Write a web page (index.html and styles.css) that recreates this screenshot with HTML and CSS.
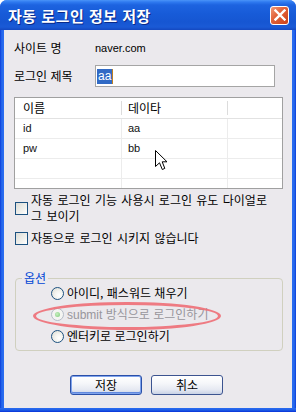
FILE: index.html
```html
<!DOCTYPE html>
<html lang="ko">
<head>
<meta charset="utf-8">
<link rel="stylesheet" href="styles.css">
</head>
<body>
<div class="win">
  <div class="titlebar">
    <span class="title-text">자동 로그인 정보 저장</span>
    <span class="close">
      <svg width="12" height="12" viewBox="0 0 12 12"><path d="M1.5 1.5 L10.5 10.5 M10.5 1.5 L1.5 10.5" stroke="#fff" stroke-width="2.4" stroke-linecap="square"/></svg>
    </span>
  </div>
  <div class="client">
    <div class="row r1"><span class="lbl">사이트 명</span><span class="val">naver.com</span></div>
    <div class="row r2"><span class="lbl">로그인 제목</span><div class="input"><span class="sel">aa</span><span class="caret"></span></div></div>
    <div class="list">
      <div class="lrow head"><div class="cell c1">이름</div><div class="cell c2">데이타</div><div class="cell c3"></div></div>
      <div class="lrow"><div class="cell c1 en">id</div><div class="cell c2 en">aa</div><div class="cell c3"></div></div>
      <div class="lrow"><div class="cell c1 en">pw</div><div class="cell c2 en">bb</div><div class="cell c3"></div></div>
      <div class="lrow"><div class="cell c1"></div><div class="cell c2"></div><div class="cell c3"></div></div>
      <div class="lrow last"><div class="cell c1"></div><div class="cell c2"></div><div class="cell c3"></div></div>
      <svg class="cursor" width="13" height="22" viewBox="0 0 13 22"><path d="M0.5 0.5 L0.5 16.5 L4.5 12.8 L7.3 19.5 L9.8 18.4 L7.2 11.8 L12 11.8 Z" fill="#fff" stroke="#000" stroke-width="1" stroke-linejoin="miter"/></svg>
    </div>
    <div class="chk chk1"><span class="box"></span><span class="ctext">자동 로그인 기능 사용시 로그인 유도 다이얼로<br>그 보이기</span></div>
    <div class="chk chk2"><span class="box"></span><span class="ctext">자동으로 로그인 시키지 않습니다</span></div>
    <fieldset class="group">
      <legend>옵션</legend>
      <div class="radios">
        <div class="radio"><span class="dot"></span><span class="rtext">아이디, 패스워드 채우기</span></div>
        <div class="radio disabled"><span class="dot on"></span><span class="rtext"><span class="en">submit</span> 방식으로 로그인하기</span></div>
        <div class="radio"><span class="dot"></span><span class="rtext">엔터키로 로그인하기</span></div>
      </div>
      <span class="mark"></span>
    </fieldset>
    <div class="buttons">
      <button class="btn default">저장</button>
      <button class="btn">취소</button>
    </div>
  </div>
</div>
</body>
</html>
```
FILE: styles.css
```css
html, body { margin: 0; padding: 0; }
body {
  width: 296px; height: 412px; overflow: hidden;
  font-family: "Noto Sans CJK KR", sans-serif;
  font-size: 12px; color: #000;
  background: #fff;
}
.win {
  width: 296px; height: 412px; box-sizing: border-box;
  background: linear-gradient(90deg, #0831d9 0, #1e5fe6 1px, #2a6cf0 3px, #2a6cf0 calc(100% - 3px), #1e5fe6 calc(100% - 1px), #0831d9 100%);
  border-radius: 7px 7px 0 0;
  display: flex; flex-direction: column;
  padding: 0 4px 4px 4px;
  position: relative;
}
.win::after {
  content: ""; position: absolute; left: 0; right: 0; bottom: 0; height: 4px;
  background: linear-gradient(#2a6cf0, #1e5fe6 2px, #0831d9);
}
.titlebar {
  height: 30px; margin: 0 -4px; padding: 0 7px 0 8px;
  display: flex; align-items: center; justify-content: space-between;
  border-radius: 7px 7px 0 0;
  background: linear-gradient(#4a94f8 0, #2f7af0 2px, #1d63e0 5px, #175bd8 14px, #1656d2 22px, #1a5ad6 27px, #1448c0 30px);
}
.title-text {
  color: #fff; font-weight: bold; font-size: 15px; line-height: 18px;
  letter-spacing: 0.5px; text-shadow: 1px 1px 0 #0a2a8a;
  margin-top: 1px;
}
.close {
  width: 19px; height: 19px; box-sizing: border-box;
  border: 1px solid #fff; border-radius: 3px;
  background: linear-gradient(135deg, #f19a78 0, #e2643c 40%, #cc4118 100%);
  display: flex; align-items: center; justify-content: center;
}
.client {
  flex: 1; background: #ebe9ed;
  padding: 10px 0 0 10px;
  display: flex; flex-direction: column;
  position: relative; z-index: 1;
}
.row { display: flex; align-items: center; }
.lbl { width: 81px; line-height: 16px; }
.val { font-family: "Liberation Sans", sans-serif; font-size: 11px; line-height: 16px; }
.r1 { height: 16px; }
.r2 { margin-top: 9px; }
.input {
  width: 180px; height: 22px; box-sizing: border-box;
  border: 1px solid #a5a5a5; background: #fff;
  display: flex; align-items: center; padding-left: 1px;
}
.sel {
  background: #316ac5; color: #fff;
  font-family: "Liberation Sans", sans-serif; font-size: 12px; line-height: 15px;
  padding: 0 1px;
}
.caret { width: 1px; height: 15px; background: #c08020; }
.list {
  margin-top: 10px; width: 269px; height: 92px; box-sizing: border-box;
  border: 1px solid #a0a0a0; background: #fff;
  position: relative; overflow: hidden;
}
.lrow { display: flex; height: 20px; border-bottom: 1px solid #ececec; box-sizing: border-box; }
.lrow.head { height: 21px; border-bottom: 1px solid #e2e2e2; }
.lrow.last { border-bottom: none; }
.cell { box-sizing: border-box; padding-left: 8px; line-height: 19px; border-right: 1px solid #ececec; }
.head .cell { line-height: 20px; font-size: 12px; border-right: none; position: relative; }
.head .c1::after, .head .c2::after {
  content: ""; position: absolute; right: 0; top: 3px; bottom: 3px; width: 1px; background: #dcdcdc;
}
.c1 { width: 107px; }
.c2 { width: 106px; padding-left: 6px; }
.c3 { flex: 1; border-right: none; }
.en { font-family: "Liberation Sans", sans-serif; font-size: 11px; color: #111; }
.cursor { position: absolute; left: 140px; top: 52px; }
.chk { display: flex; align-items: center; }
.chk1 { margin-top: 3px; }
.chk2 { margin-top: 6px; }
.box {
  flex: none; width: 13px; height: 13px; box-sizing: border-box;
  border: 1px solid #1c5180;
  background: linear-gradient(135deg, #dcdcd7 0, #f0f0ec 60%, #fff 100%);
  margin-left: 1px; margin-right: 3px;
}
.ctext { line-height: 16px; word-spacing: 1px; white-space: nowrap; }
.group {
  margin: 24px 0 0 1px; padding: 0 0 6px 0;
  width: 268px; box-sizing: border-box;
  border: 1px solid #d0d0bf; border-radius: 4px;
  position: relative;
}
.group legend {
  color: #0046d5; padding: 0 2px; margin-left: 6px; line-height: 16px; font-size: 12px;
}
.radios { display: flex; flex-direction: column; gap: 5.5px; padding-left: 35px; margin-top: -1px; }
.radio { display: flex; align-items: center; height: 16px; }
.dot {
  width: 13px; height: 13px; box-sizing: border-box; border-radius: 50%;
  border: 1px solid #1c5180;
  background: radial-gradient(circle at 65% 65%, #fff 0, #f4f4f0 40%, #d8d8d0 100%);
  margin-right: 3px; position: relative;
}
.disabled .dot { border-color: #b4bcc8; background: #f4f4f2; }
.dot.on::after {
  content: ""; position: absolute; left: 3px; top: 3px; width: 5px; height: 5px; border-radius: 50%;
  background: radial-gradient(circle at 40% 40%, #c8f0c0, #7cc87a);
}
.rtext { line-height: 16px; }
.disabled .rtext { color: #98969c; }
.disabled .en { color: #98969c; font-size: 12px; }
.mark {
  position: absolute; left: 17px; top: 16px; width: 188px; height: 28px; box-sizing: border-box;
  border: 3px solid rgba(238, 110, 118, 0.9); border-radius: 50%;
}
.buttons { display: flex; gap: 9px; margin-top: 24px; padding-left: 56px; }
.btn {
  width: 72px; height: 20px; box-sizing: border-box; padding: 0;
  font-family: "Noto Sans CJK KR", sans-serif; font-size: 12px; line-height: 16px; color: #000;
  border: 1px solid #3c5490; border-radius: 3px;
  background: linear-gradient(#ffffff 0, #f6f7fa 40%, #e6e9f2 75%, #c9d2e6 100%);
}
.btn.default {
  border-color: #2a4fa8;
  box-shadow: inset 0 0 0 1px #7fa3ec, inset 0 -1px 0 1px #6088de;
}
```
